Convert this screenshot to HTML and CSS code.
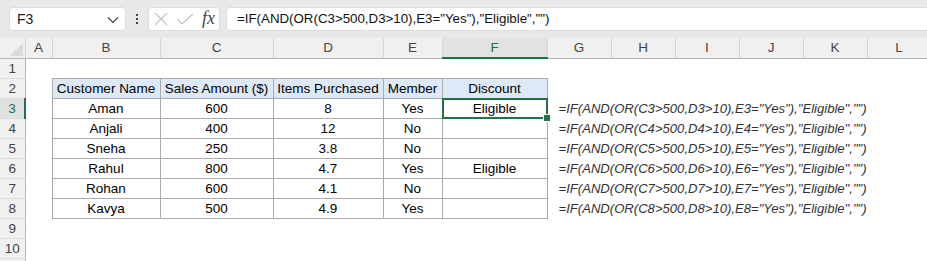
FILE: index.html
```html
<!DOCTYPE html>
<html lang="en">

<head>
    <meta charset="UTF-8">
    <title>Discount Sheet</title>
    <link rel="stylesheet" href="styles.css">
</head>

<body>
    <!-- Formula bar -->
    <div class="toolbar">
        <div class="nameBox">
            <span>F3</span>
            <svg class="chevron" width="12" height="8" viewBox="0 0 12 8">
                <path d="M1 1.5 L6 6.5 L11 1.5" fill="none" stroke="#444" stroke-width="1.2" />
            </svg>
        </div>
        <div class="dots">
            <span></span><span></span><span></span>
        </div>
        <div class="fxBox">
            <svg width="14" height="14" viewBox="0 0 14 14">
                <path d="M1 1 L13 13 M13 1 L1 13" stroke="#c4c4c4" stroke-width="1.2" />
            </svg>
            <svg class="check" width="18" height="12" viewBox="0 0 18 12">
                <path d="M1 6 L6 11 L17 1" fill="none" stroke="#c4c4c4" stroke-width="1.2" />
            </svg>
            <span class="fx">fx</span>
        </div>
        <div class="formulaInput">=IF(AND(OR(C3&gt;500,D3&gt;10),E3="Yes"),"Eligible","")</div>
    </div>

    <!-- Grid -->
    <table class="sheet">
        <colgroup>
            <col style="width:25px">
            <col style="width:27px">
            <col style="width:108px">
            <col style="width:113px">
            <col style="width:110px">
            <col style="width:59px">
            <col style="width:105px">
            <col style="width:64px">
            <col style="width:64px">
            <col style="width:64px">
            <col style="width:64px">
            <col style="width:64px">
            <col style="width:64px">
        </colgroup>
        <thead>
            <tr>
                <th class="corner"><span class="cornerMark"></span></th>
                <th>A</th><th>B</th><th>C</th><th>D</th><th>E</th>
                <th class="activeCol">F</th>
                <th>G</th><th>H</th><th>I</th><th>J</th><th>K</th><th>L</th>
            </tr>
        </thead>
        <tbody>
            <tr>
                <th class="rowNum">1</th>
                <td></td><td></td><td></td><td></td><td></td><td></td>
                <td colspan="5"></td><td></td>
            </tr>
            <tr>
                <th class="rowNum">2</th>
                <td></td>
                <td class="cell head">Customer Name</td>
                <td class="cell head">Sales Amount ($)</td>
                <td class="cell head">Items Purchased</td>
                <td class="cell head">Member</td>
                <td class="cell head">Discount</td>
                <td colspan="5"></td><td></td>
            </tr>
            <tr>
                <th class="rowNum activeRow">3</th>
                <td></td>
                <td class="cell">Aman</td>
                <td class="cell">600</td>
                <td class="cell">8</td>
                <td class="cell">Yes</td>
                <td class="cell selected">Eligible</td>
                <td colspan="5" class="formulaText">=IF(AND(OR(C3&gt;500,D3&gt;10),E3="Yes"),"Eligible","")</td><td></td>
            </tr>
            <tr>
                <th class="rowNum">4</th>
                <td></td>
                <td class="cell">Anjali</td>
                <td class="cell">400</td>
                <td class="cell">12</td>
                <td class="cell">No</td>
                <td class="cell"></td>
                <td colspan="5" class="formulaText">=IF(AND(OR(C4&gt;500,D4&gt;10),E4="Yes"),"Eligible","")</td><td></td>
            </tr>
            <tr>
                <th class="rowNum">5</th>
                <td></td>
                <td class="cell">Sneha</td>
                <td class="cell">250</td>
                <td class="cell">3.8</td>
                <td class="cell">No</td>
                <td class="cell"></td>
                <td colspan="5" class="formulaText">=IF(AND(OR(C5&gt;500,D5&gt;10),E5="Yes"),"Eligible","")</td><td></td>
            </tr>
            <tr>
                <th class="rowNum">6</th>
                <td></td>
                <td class="cell">Rahul</td>
                <td class="cell">800</td>
                <td class="cell">4.7</td>
                <td class="cell">Yes</td>
                <td class="cell">Eligible</td>
                <td colspan="5" class="formulaText">=IF(AND(OR(C6&gt;500,D6&gt;10),E6="Yes"),"Eligible","")</td><td></td>
            </tr>
            <tr>
                <th class="rowNum">7</th>
                <td></td>
                <td class="cell">Rohan</td>
                <td class="cell">600</td>
                <td class="cell">4.1</td>
                <td class="cell">No</td>
                <td class="cell"></td>
                <td colspan="5" class="formulaText">=IF(AND(OR(C7&gt;500,D7&gt;10),E7="Yes"),"Eligible","")</td><td></td>
            </tr>
            <tr>
                <th class="rowNum">8</th>
                <td></td>
                <td class="cell">Kavya</td>
                <td class="cell">500</td>
                <td class="cell">4.9</td>
                <td class="cell">Yes</td>
                <td class="cell"></td>
                <td colspan="5" class="formulaText">=IF(AND(OR(C8&gt;500,D8&gt;10),E8="Yes"),"Eligible","")</td><td></td>
            </tr>
            <tr>
                <th class="rowNum">9</th>
                <td></td><td></td><td></td><td></td><td></td><td></td>
                <td colspan="5"></td><td></td>
            </tr>
            <tr>
                <th class="rowNum">10</th>
                <td></td><td></td><td></td><td></td><td></td><td></td>
                <td colspan="5"></td><td></td>
            </tr>
            <tr>
                <th class="rowNum"></th>
                <td></td><td></td><td></td><td></td><td></td><td></td>
                <td colspan="5"></td><td></td>
            </tr>
        </tbody>
    </table>
</body>

</html>
```

FILE: styles.css
```css
body {
    font-family: "Liberation Sans", Arial, sans-serif;
    margin: 0;
    padding: 0;
    background-color: #fff;
    overflow: hidden;
    width: 927px;
    height: 261px;
}

/* Formula bar */
.toolbar {
    display: flex;
    align-items: center;
    height: 38px;
    padding: 0 0 0 9px;
    background-color: #e8e8ea;
    box-sizing: border-box;
}

.nameBox {
    display: flex;
    align-items: center;
    justify-content: space-between;
    width: 117px;
    height: 24px;
    padding: 0 6px 0 7px;
    box-sizing: border-box;
    background-color: #fff;
    border: 1px solid #dcdcdc;
    border-radius: 4px;
    font-size: 14px;
    color: #222;
}

.chevron {
    margin-top: 1px;
}

.dots {
    display: flex;
    flex-direction: column;
    gap: 2px;
    width: 22px;
    align-items: center;
}

.dots span {
    display: block;
    width: 2px;
    height: 2px;
    background-color: #444;
}

.fxBox {
    display: flex;
    align-items: center;
    width: 72px;
    height: 24px;
    padding: 0 0 0 5px;
    box-sizing: border-box;
    background-color: #fff;
    border: 1px solid #dcdcdc;
    border-radius: 4px;
}

.check {
    margin-left: 8px;
}

.fx {
    margin-left: 8px;
    font-family: "Liberation Serif", serif;
    font-style: italic;
    font-size: 18px;
    color: #444;
    line-height: 1;
    margin-top: -3px;
}

.formulaInput {
    flex: 1;
    height: 24px;
    margin-left: 6px;
    margin-right: -10px;
    padding-left: 10px;
    box-sizing: border-box;
    background-color: #fff;
    border: 1px solid #dcdcdc;
    border-radius: 4px;
    font-size: 13.3px;
    line-height: 22px;
    color: #111;
    white-space: nowrap;
}

/* Grid */
.sheet {
    border-collapse: collapse;
    table-layout: fixed;
    width: 931px;
    font-size: 13.5px;
    color: #000;
}

.sheet th,
.sheet td {
    height: 20px;
    padding: 0;
    box-sizing: border-box;
    white-space: nowrap;
}

.sheet thead th {
    background-color: #f0f0f0;
    border-right: 1px solid #d6d6d6;
    border-bottom: 1px solid #b4b4b4;
    font-weight: normal;
    font-size: 13.5px;
    color: #444;
    text-align: center;
}

.sheet thead th.activeCol {
    background-color: #e2e2e2;
    color: #217346;
    border-bottom: 2px solid #217346;
}

.corner {
    position: relative;
}

.cornerMark {
    position: absolute;
    right: 2px;
    bottom: 2px;
    width: 0;
    height: 0;
    border-left: 13px solid transparent;
    border-bottom: 13px solid #dadada;
}

.rowNum {
    background-color: #f0f0f0;
    border-right: 1px solid #b4b4b4;
    border-bottom: 1px solid #dcdcdc;
    font-weight: normal;
    font-size: 13.5px;
    color: #444;
    text-align: center;
}

.rowNum.activeRow {
    background-color: #e0e0e0;
    color: #217346;
    border-right: 2px solid #217346;
}

.sheet .cell {
    border: 1px solid #ababab;
    text-align: center;
    padding-top: 1px;
}

.cell.head {
    background-color: #dde9f6;
}

.cell.selected {
    position: relative;
}

.cell.selected::after {
    content: "";
    position: absolute;
    left: -1px;
    top: -1px;
    right: -1px;
    bottom: -1px;
    border: 2px solid #217346;
}

.cell.selected::before {
    content: "";
    position: absolute;
    right: -4px;
    bottom: -4px;
    width: 6px;
    height: 6px;
    background-color: #217346;
    border: 1px solid #fff;
    z-index: 1;
}

.sheet .formulaText {
    padding: 1px 0 0 11px;
    font-style: italic;
    font-size: 13.1px;
    color: #333;
    overflow: visible;
}
```
